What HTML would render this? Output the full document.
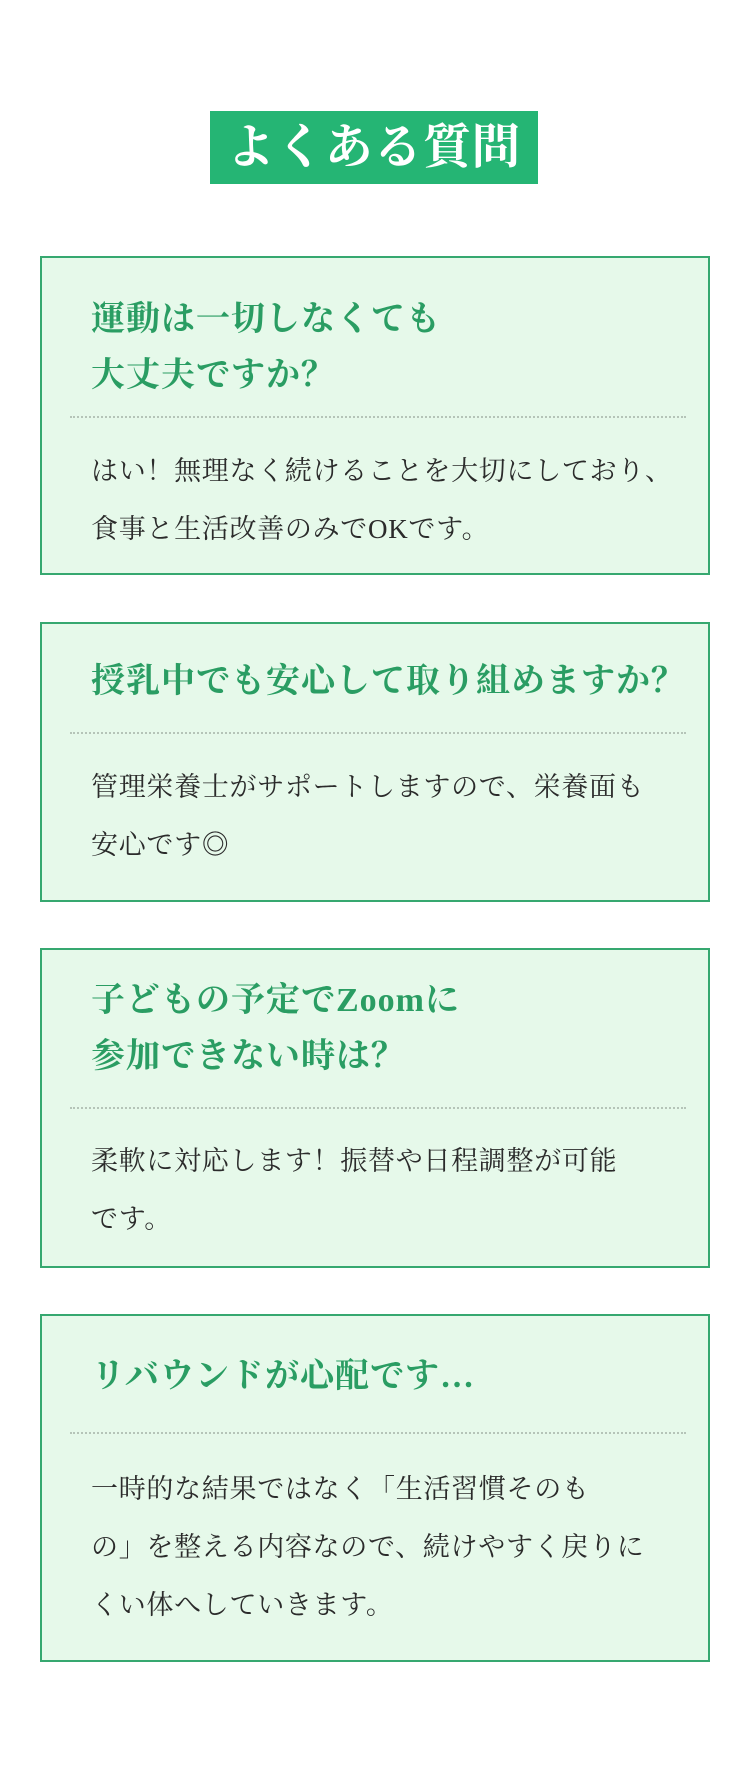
<!DOCTYPE html>
<html><head><meta charset="utf-8"><style>
html,body{margin:0;padding:0;background:#fff;}
body{width:750px;height:1785px;position:relative;overflow:hidden;font-family:"Liberation Serif","Noto Serif CJK SC",serif;}
.h{position:absolute;left:210px;top:111px;width:328px;height:73px;background:#25b574;color:#fff;font-size:48px;font-weight:bold;line-height:73px;text-align:center;letter-spacing:1px;}
.box{position:absolute;left:40px;width:666px;background:#e6f9ea;border:2px solid #36a870;}
.q{position:absolute;left:49px;color:#2a9d63;font-size:34px;font-weight:bold;line-height:56px;white-space:nowrap;letter-spacing:1px;}
.d{position:absolute;left:28px;width:616px;height:0;border-top:2px dotted #b5c4b8;}
.a{position:absolute;left:49px;color:#2b2b2b;font-size:27px;line-height:58px;white-space:nowrap;letter-spacing:0.7px;}
</style></head><body>
<div class="h">よくある質問</div>

<div class="box" style="top:256px;height:315px;">
<div class="q" style="top:34px;">運動は一切しなくても<br>大丈夫ですか？</div>
<div class="d" style="top:158px;"></div>
<div class="a" style="top:184px;">はい！無理なく続けることを大切にしており、<br>食事と生活改善のみでOKです。</div>
</div>

<div class="box" style="top:622px;height:276px;">
<div class="q" style="top:30px;">授乳中でも安心して取り組めますか？</div>
<div class="d" style="top:108px;"></div>
<div class="a" style="top:134px;">管理栄養士がサポートしますので、栄養面も<br>安心です◎</div>
</div>

<div class="box" style="top:948px;height:316px;">
<div class="q" style="top:23px;">子どもの予定でZoomに<br>参加できない時は？</div>
<div class="d" style="top:157px;"></div>
<div class="a" style="top:182px;">柔軟に対応します！振替や日程調整が可能<br>です。</div>
</div>

<div class="box" style="top:1314px;height:344px;">
<div class="q" style="top:33px;">リバウンドが心配です…</div>
<div class="d" style="top:116px;"></div>
<div class="a" style="top:144px;">一時的な結果ではなく「生活習慣そのも<br>の」を整える内容なので、続けやすく戻りに<br>くい体へしていきます。</div>
</div>
</body></html>
